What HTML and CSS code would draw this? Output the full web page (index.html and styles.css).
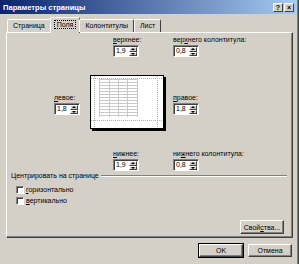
FILE: index.html
```html
<!DOCTYPE html>
<html lang="ru">
<head>
    <meta charset="UTF-8">
    <title>Параметры страницы</title>
    <link rel="stylesheet" href="styles.css">
</head>
<body>
    <div class="window">
        <div class="titlebar">
            <span class="title">Параметры страницы</span>
            <div class="caption-btns">
                <span class="cbtn">?</span>
                <span class="cbtn">&times;</span>
            </div>
        </div>

        <div class="tabs">
            <span class="tab">Страница</span>
            <span class="tab active"><span class="focus">Поля</span></span>
            <span class="tab">Колонтитулы</span>
            <span class="tab">Лист</span>
        </div>

        <div class="panel">
            <div class="margins">
                <div></div>
                <div class="field top">
                    <label><u>в</u>ерхнее:</label>
                    <div class="spin"><span class="spin-val">1,9</span><span class="spin-btns"><span class="up"></span><span class="dn"></span></span></div>
                </div>
                <div class="field">
                    <label>вер<u>х</u>него колонтитула:</label>
                    <div class="spin"><span class="spin-val">0,8</span><span class="spin-btns"><span class="up"></span><span class="dn"></span></span></div>
                </div>

                <div class="field mid">
                    <label><u>л</u>евое:</label>
                    <div class="spin"><span class="spin-val">1,8</span><span class="spin-btns"><span class="up"></span><span class="dn"></span></span></div>
                </div>
                <div class="preview">
                    <svg width="76" height="56" viewBox="0 0 76 56">
                        <rect x="2" y="2" width="74" height="54" fill="#000"/>
                        <rect x="0.5" y="0.5" width="73" height="53" fill="#fff" stroke="#000"/>
                        <g stroke="#c8c8c8" stroke-width="1">
                            <path d="M9.5 4v38M19.5 4v38M28.5 4v38M37.5 4v38M47.5 4v38"/>
                            <path d="M9 4.5h39M9 7.5h39M9 10.5h39M9 13.5h39M9 16.5h39M9 19.5h39M9 22.5h39M9 25.5h39M9 28.5h39M9 31.5h39M9 34.5h39M9 37.5h39M9 40.5h39"/>
                        </g>
                        <g stroke="#b0b0b0" stroke-width="1" stroke-dasharray="1 1">
                            <path d="M4.5 1v52M67.5 1v52M1 3.5h72M1 45.5h72"/>
                        </g>
                    </svg>
                </div>
                <div class="field mid">
                    <label><u>п</u>равое:</label>
                    <div class="spin"><span class="spin-val">1,8</span><span class="spin-btns"><span class="up"></span><span class="dn"></span></span></div>
                </div>

                <div></div>
                <div class="field top bottom-row">
                    <label><u>н</u>ижнее:</label>
                    <div class="spin"><span class="spin-val">1,9</span><span class="spin-btns"><span class="up"></span><span class="dn"></span></span></div>
                </div>
                <div class="field bottom-row">
                    <label>ни<u>ж</u>него колонтитула:</label>
                    <div class="spin"><span class="spin-val">0,8</span><span class="spin-btns"><span class="up"></span><span class="dn"></span></span></div>
                </div>
            </div>

            <div class="group">
                <div class="group-head"><span>Центрировать на странице</span><span class="etch"></span></div>
                <div class="check"><span class="box"></span><span><u>г</u>оризонтально</span></div>
                <div class="check"><span class="box"></span><span><u>в</u>ертикально</span></div>
            </div>

            <div class="panel-foot">
                <button class="btn">Свой<u>с</u>тва...</button>
            </div>
        </div>

        <div class="footer">
            <button class="btn default">OK</button>
            <button class="btn">Отмена</button>
        </div>
    </div>
</body>
</html>
```

FILE: styles.css
```css
* {
    margin: 0;
    padding: 0;
    box-sizing: border-box;
}
body {
    width: 299px;
    height: 264px;
    overflow: hidden;
    background: #404040;
    font-family: "Liberation Sans", Arial, sans-serif;
    font-size: 7px;
    color: #000;
}
u {
    text-decoration: underline;
}
.window {
    width: 298px;
    height: 264px;
    background: #d4d0c8;
    border-right: 1px solid #808080;
}
.titlebar {
    height: 14px;
    display: flex;
    align-items: center;
    justify-content: space-between;
    padding: 0 3px 0 3px;
    background: linear-gradient(to right, #0a246a, #a6caf0);
}
.title {
    color: #fff;
    font-weight: bold;
    font-size: 7.6px;
}
.caption-btns {
    display: flex;
    gap: 1px;
}
.cbtn {
    width: 10px;
    height: 9px;
    background: #d4d0c8;
    border: 1px solid;
    border-color: #fff #404040 #404040 #fff;
    font-size: 7px;
    font-weight: bold;
    line-height: 7px;
    text-align: center;
}
.tabs {
    display: flex;
    align-items: flex-end;
    height: 18px;
    padding-left: 7px;
    position: relative;
    z-index: 1;
}
.tab {
    height: 13px;
    line-height: 12px;
    padding: 0 5px;
    border: 1px solid;
    border-bottom: none;
    border-color: #fff #404040 #fff #fff;
    border-radius: 2px 2px 0 0;
    background: #d4d0c8;
}
.tab.active {
    height: 16px;
    line-height: 13px;
    margin: 0 -1px -1px -1px;
    padding: 0 4px;
}
.focus {
    outline: 1px dotted #000;
    padding: 0 2px;
}
.panel {
    margin-left: 6px;
    width: 287px;
    height: 206px;
    border: 1px solid;
    border-color: #fff #404040 #404040 #fff;
    box-shadow: inset -1px -1px #808080;
    display: flex;
    flex-direction: column;
}
.margins {
    display: grid;
    grid-template-columns: 36px 83px auto;
    padding: 3px 0 0 47px;
}
.field {
    display: flex;
    flex-direction: column;
    gap: 1px;
}
.field label {
    line-height: 8px;
    white-space: nowrap;
}
.field.top {
    padding-left: 23px;
}
.field.mid {
    align-self: start;
    margin-top: 37px;
}
.field.bottom-row {
    margin-top: 19px;
}
.preview {
    margin-top: 18px;
    height: 56px;
}
.preview svg {
    display: block;
}
.spin {
    width: 26px;
    height: 12px;
    display: flex;
    background: #fff;
    border: 1px solid;
    border-color: #808080 #fff #fff #808080;
    box-shadow: inset 1px 1px #404040;
}
.spin-val {
    flex: 1;
    padding-left: 2px;
    line-height: 10px;
}
.spin-btns {
    width: 9px;
    display: flex;
    flex-direction: column;
    padding: 1px 1px 0 0;
}
.spin-btns span {
    height: 5px;
    background: #d4d0c8;
    border: 1px solid;
    border-color: #fff #404040 #404040 #fff;
    display: flex;
    align-items: center;
    justify-content: center;
}
.spin-btns .up::after {
    content: "";
    border: 2px solid transparent;
    border-top: none;
    border-bottom: 2px solid #000;
}
.spin-btns .dn::after {
    content: "";
    border: 2px solid transparent;
    border-bottom: none;
    border-top: 2px solid #000;
}
.group {
    padding: 1px 5px 0 4px;
}
.group-head {
    display: flex;
    align-items: center;
    gap: 2px;
    line-height: 8px;
}
.etch {
    flex: 1;
    height: 2px;
    border-top: 1px solid #808080;
    border-bottom: 1px solid #fff;
}
.check {
    display: flex;
    align-items: center;
    gap: 2px;
    padding-left: 5px;
    height: 11px;
    line-height: 8px;
}
.group-head + .check {
    margin-top: 4px;
}
.box {
    width: 8px;
    height: 8px;
    background: #fff;
    border: 1px solid;
    border-color: #808080 #fff #fff #808080;
    box-shadow: inset 1px 1px #404040;
}
.panel-foot {
    margin-top: auto;
    display: flex;
    justify-content: flex-end;
    padding: 0 8px 3px 0;
}
.btn {
    font-family: "Liberation Sans", Arial, sans-serif;
    font-size: 7px;
    width: 44px;
    height: 14px;
    background: #d4d0c8;
    border: 1px solid;
    border-color: #fff #404040 #404040 #fff;
    box-shadow: inset -1px -1px #808080;
    color: #000;
}
.btn.default {
    outline: 1px solid #000;
}
.footer {
    display: flex;
    justify-content: flex-end;
    gap: 5px;
    padding: 6px 5px 0 0;
}
.footer .btn {
    height: 13px;
}
```
